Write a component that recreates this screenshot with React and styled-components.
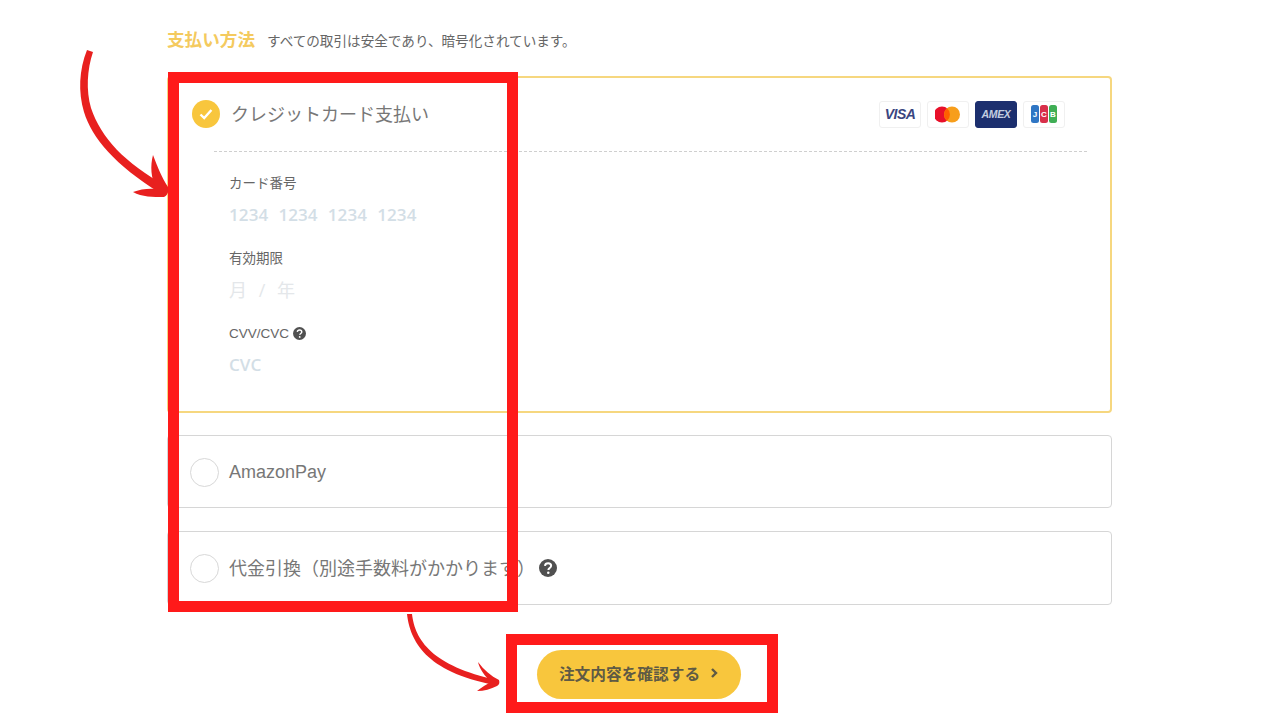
import React from "react";
import styled, { createGlobalStyle } from "styled-components";

const Global = createGlobalStyle`
  html, body { margin: 0; padding: 0; background: #fff; }
  body { font-family: "Liberation Sans", "Noto Sans CJK JP", sans-serif; color: #666; }
`;

const Page = styled.div`
  position: relative;
  width: 1280px;
  height: 720px;
  overflow: hidden;
  box-sizing: border-box;
  padding: 28px 168px 0 167px;
`;

const Heading = styled.div`
  display: flex;
  align-items: center;
  gap: 12px;
  height: 24px;
  margin-bottom: 24px;
`;

const HeadingTitle = styled.h2`
  margin: 0 0 3px;
  font-size: 17.6px;
  font-weight: 700;
  color: #f4ca5e;
`;

const HeadingNote = styled.span`
  font-size: 13.6px;
  color: #666;
`;

const Card = styled.section`
  box-sizing: border-box;
  height: ${(p) => p.$height}px;
  margin-bottom: ${(p) => p.$gap}px;
  border: ${(p) => (p.$active ? "2px solid #f6d77f" : "1px solid #d6d6d6")};
  border-radius: 4px;
  background: #fff;
`;

const CardHeader = styled.div`
  display: flex;
  align-items: center;
  height: 72px;
  padding: 0 45px 0 23px;
`;

const Divider = styled.hr`
  height: 0;
  margin: 1px 23px 0 45px;
  border: 0;
  border-top: 1px dashed #cfcfcf;
`;

const ActiveDot = styled.span`
  display: flex;
  align-items: center;
  justify-content: center;
  width: 28px;
  height: 28px;
  border-radius: 50%;
  background: #f8c63d;
`;

const CardTitle = styled.span`
  margin: 0 0 3px 11px;
  font-size: 18px;
  color: #777;
`;

const Brands = styled.div`
  display: flex;
  align-items: center;
  gap: 6px;
  margin-left: auto;
`;

const Brand = styled.span`
  display: flex;
  align-items: center;
  justify-content: center;
  box-sizing: border-box;
  width: 42px;
  height: 27px;
  border: 1px solid ${(p) => (p.$dark ? "#1c2f6e" : "#f0f0f0")};
  border-radius: 3px;
  background: ${(p) => (p.$dark ? "#1c2f6e" : "#fff")};
`;

const VisaMark = styled.span`
  font-size: 14px;
  font-style: italic;
  font-weight: 700;
  letter-spacing: -0.5px;
  color: #3a4580;
`;

const AmexMark = styled.span`
  font-size: 10.5px;
  font-style: italic;
  font-weight: 700;
  letter-spacing: -0.3px;
  color: #c3cde0;
`;

const JcbBar = styled.span`
  display: flex;
  align-items: center;
  justify-content: center;
  width: 8px;
  height: 18px;
  margin: 0 0.5px;
  border-radius: 2.5px;
  background: ${(p) => p.$color};
  color: #fff;
  font-size: 8px;
  font-weight: 700;
`;

const Fields = styled.div`
  display: flex;
  flex-direction: column;
  padding: 21px 0 0 60px;
`;

const Field = styled.div`
  display: flex;
  flex-direction: column;
  height: 75px;
`;

const Label = styled.label`
  display: flex;
  align-items: center;
  gap: 4px;
  box-sizing: border-box;
  height: 20px;
  padding-bottom: ${(p) => (p.$raised ? 2 : 0)}px;
  font-size: 13.5px;
  color: #666;
`;

const Placeholder = styled.span`
  margin-top: 11px;
  font-family: "Open Sans", "Noto Sans CJK JP", sans-serif;
  font-size: ${(p) => (p.$light ? 18 : 17)}px;
  font-weight: ${(p) => (p.$light ? 400 : 600)};
  line-height: 22px;
  word-spacing: ${(p) => (p.$light ? "7px" : "5.6px")};
  letter-spacing: ${(p) => (p.$light ? "0" : "0.1px")};
  color: ${(p) => (p.$light ? "#e4e7ea" : "#d3dee6")};
`;

const OptionRow = styled.div`
  display: flex;
  align-items: center;
  box-sizing: border-box;
  height: 100%;
  padding: 1px 0 0 22px;
`;

const Radio = styled.span`
  box-sizing: border-box;
  width: 29px;
  height: 29px;
  border: 1px solid #d8d8d8;
  border-radius: 50%;
`;

const OptionText = styled.span`
  margin: 0 0 ${(p) => (p.$raised ? 4 : 0)}px 10px;
  font-size: 18px;
  color: #777;
`;

const OptionHelp = styled.span`
  display: flex;
  margin: 0 0 2px 4px;
`;

const ButtonRow = styled.div`
  display: flex;
  justify-content: center;
  width: 944px;
  padding-top: 45px;
`;

const Submit = styled.button`
  display: flex;
  align-items: center;
  justify-content: center;
  gap: 9px;
  box-sizing: border-box;
  width: 204px;
  height: 49px;
  padding: 0 0 3px;
  border: 0;
  border-radius: 25px;
  background: #f8c63d;
  color: #5f5a44;
  font-family: inherit;
  font-size: 15.7px;
  font-weight: 700;
`;

const Frame = styled.div`
  position: absolute;
  left: ${(p) => p.$x}px;
  top: ${(p) => p.$y}px;
  width: ${(p) => p.$w}px;
  height: ${(p) => p.$h}px;
  box-sizing: border-box;
  border: 11px solid #ff1a1a;
  pointer-events: none;
`;

const Arrows = styled.svg`
  position: absolute;
  inset: 0;
  width: 1280px;
  height: 720px;
  pointer-events: none;
`;

const Help = ({ size = 13 }) => (
  <svg width={size} height={size} viewBox="0 0 20 20" aria-hidden="true">
    <circle cx="10" cy="10" r="10" fill="#505050" />
    <path d="M6.6 7.6C6.8 5.7 8.2 4.7 10.1 4.7c2 0 3.4 1.1 3.4 2.8 0 2.4-3.1 2.5-3.1 4.6" fill="none" stroke="#fff" strokeWidth="2.2" />
    <circle cx="10.3" cy="15.2" r="1.4" fill="#fff" />
  </svg>
);

export default function App() {
  return (
    <Page>
      <Global />
      <Heading>
        <HeadingTitle>支払い方法</HeadingTitle>
        <HeadingNote>すべての取引は安全であり、暗号化されています。</HeadingNote>
      </Heading>

      <Card $active $height={337} $gap={22}>
        <CardHeader>
          <ActiveDot>
            <svg width="16" height="16" viewBox="0 0 16 16" aria-hidden="true">
              <path d="M2.5 8.5l3.7 3.5 7.2-8" fill="none" stroke="#fff" strokeWidth="2.4" />
            </svg>
          </ActiveDot>
          <CardTitle>クレジットカード支払い</CardTitle>
          <Brands>
            <Brand>
              <VisaMark>VISA</VisaMark>
            </Brand>
            <Brand>
              <svg width="27" height="17" viewBox="0 0 27 17" aria-hidden="true">
                <circle cx="7" cy="8.5" r="8" fill="#e8102a" />
                <circle cx="17" cy="8.5" r="8" fill="#f79e1b" />
                <path d="M12 2.3a8 8 0 0 1 0 12.4a8 8 0 0 1 0-12.4z" fill="#ff5f00" />
              </svg>
            </Brand>
            <Brand $dark>
              <AmexMark>AMEX</AmexMark>
            </Brand>
            <Brand>
              <JcbBar $color="#2f76c4">J</JcbBar>
              <JcbBar $color="#d8304a">C</JcbBar>
              <JcbBar $color="#3fae55">B</JcbBar>
            </Brand>
          </Brands>
        </CardHeader>
        <Divider />
        <Fields>
          <Field>
            <Label $raised>カード番号</Label>
            <Placeholder>1234 1234 1234 1234</Placeholder>
          </Field>
          <Field>
            <Label $raised>有効期限</Label>
            <Placeholder $light>月 / 年</Placeholder>
          </Field>
          <Field>
            <Label>
              CVV/CVC <Help />
            </Label>
            <Placeholder>CVC</Placeholder>
          </Field>
        </Fields>
      </Card>

      <Card $height={73} $gap={23}>
        <OptionRow>
          <Radio />
          <OptionText>AmazonPay</OptionText>
        </OptionRow>
      </Card>

      <Card $height={74} $gap={0}>
        <OptionRow>
          <Radio />
          <OptionText $raised>代金引換（別途手数料がかかります）</OptionText>
          <OptionHelp>
            <Help size={18} />
          </OptionHelp>
        </OptionRow>
      </Card>

      <ButtonRow>
        <Submit>
          注文内容を確認する
          <svg width="10" height="12" viewBox="0 0 10 12" aria-hidden="true">
            <path d="M3 2l4 4-4 4" fill="none" stroke="#5f5a44" strokeWidth="2.4" />
          </svg>
        </Submit>
      </ButtonRow>

      <Frame $x={168} $y={72} $w={350} $h={540} />
      <Frame $x={506} $y={634} $w={272} $h={79} />

      <Arrows viewBox="0 0 1280 720" aria-hidden="true">
        <path
          d="M87 50C79 70 78 92 84 112C92 138 115 165 160 193L166 186C125 163 101 138 91 108C86 90 87 70 93 52z"
          fill="#e8201f"
        />
        <path
          d="M153 155C158 168 162 178 168 187C169 191 168 195 164 197C153 197 142 197 133 192C140 189 150 188 156 189C151 178 150 166 153 155z"
          fill="#e8201f"
        />
        <path
          d="M407 614C410 640 425 672 495 685L497 680C432 666 415 640 412 614z"
          fill="#e8201f"
        />
        <path
          d="M478 662C484 670 491 676 499 680C500 683 499 685 497 686C491 689 484 691 477 691C482 687 487 684 491 682C485 676 480 670 478 662z"
          fill="#e8201f"
        />
      </Arrows>
    </Page>
  );
}
